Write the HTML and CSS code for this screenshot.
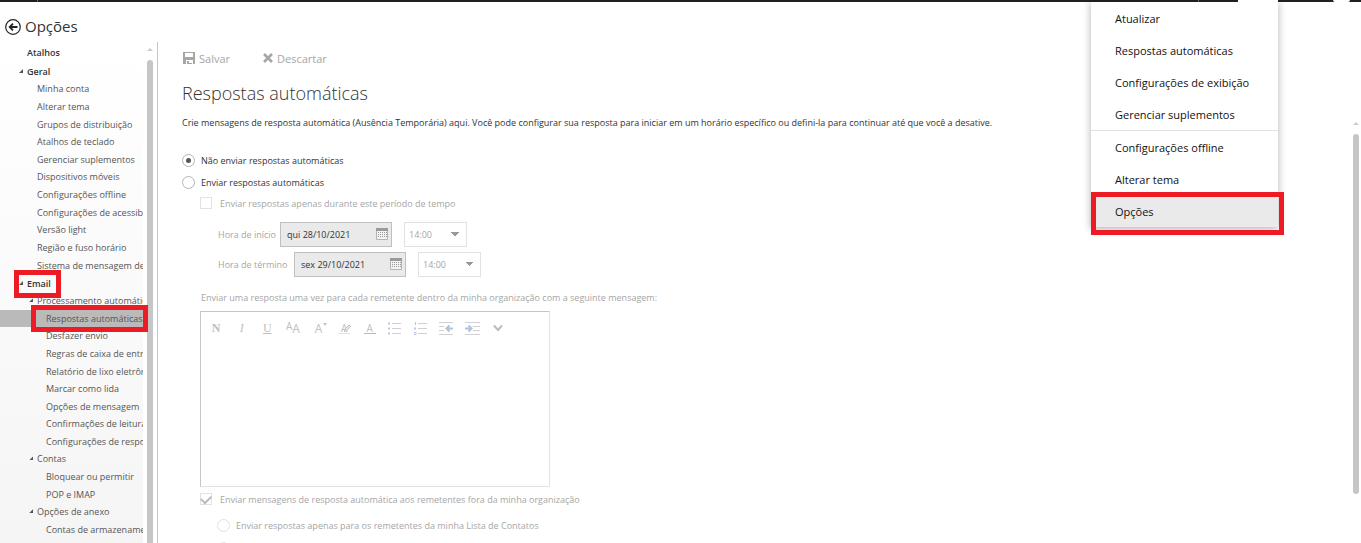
FILE: index.html
```html
<!doctype html>
<html lang="pt-BR">
<head>
  <meta charset="utf-8">
  <title>Opções</title>
  <link rel="stylesheet" href="styles.css">
</head>

<body>
  <div class="topbar">
    <span class="topbar-sep"></span>
    <span class="topbar-sep right"></span>
    <span class="topbar-gear"></span>
    <span class="topbar-avatar"></span>
  </div>

  <header class="page-header">
    <button type="button" class="back" aria-label="Voltar">
      <svg width="16" height="16" viewBox="0 0 16 16" fill="none" stroke="#222">
        <circle cx="8" cy="8" r="7.3" stroke-width="1.2"/>
        <path d="M12.5 8H5M8 4.7L4.7 8L8 11.3" stroke-width="1.8"/>
      </svg>
    </button>
    <h1>Opções</h1>
  </header>

  <div class="layout">
    <!-- Navigation -->
    <nav class="sidebar">
      <div class="tree">
        <a href="#" class="head first">Atalhos</a>
        <a href="#" class="head open">Geral</a>
        <ul class="list general">
          <li><a href="#">Minha conta</a></li>
          <li><a href="#">Alterar tema</a></li>
          <li><a href="#">Grupos de distribuição</a></li>
          <li><a href="#">Atalhos de teclado</a></li>
          <li><a href="#">Gerenciar suplementos</a></li>
          <li><a href="#">Dispositivos móveis</a></li>
          <li><a href="#">Configurações offline</a></li>
          <li><a href="#">Configurações de acessibilidade</a></li>
          <li><a href="#">Versão light</a></li>
          <li><a href="#">Região e fuso horário</a></li>
          <li><a href="#">Sistema de mensagem de texto</a></li>
        </ul>
        <a href="#" class="head open marked">Email<span class="mark mark-email"></span></a>
        <ul class="list email">
          <li><a href="#" class="open">Processamento automático</a></li>
          <li class="sub selected marked"><a href="#">Respostas automáticas</a><span class="mark mark-replies"></span></li>
          <li class="sub"><a href="#">Desfazer envio</a></li>
          <li class="sub"><a href="#">Regras de caixa de entrada</a></li>
          <li class="sub"><a href="#">Relatório de lixo eletrônico</a></li>
          <li class="sub"><a href="#">Marcar como lida</a></li>
          <li class="sub"><a href="#">Opções de mensagem</a></li>
          <li class="sub"><a href="#">Confirmações de leitura</a></li>
          <li class="sub"><a href="#">Configurações de resposta</a></li>
          <li><a href="#" class="open">Contas</a></li>
          <li class="sub"><a href="#">Bloquear ou permitir</a></li>
          <li class="sub"><a href="#">POP e IMAP</a></li>
          <li><a href="#" class="open">Opções de anexo</a></li>
          <li class="sub"><a href="#">Contas de armazenamento</a></li>
        </ul>
      </div>
      <div class="scrollbar">
        <span class="scroll-up"></span>
        <span class="thumb"></span>
      </div>
    </nav>

    <main class="content">
      <div class="toolbar">
        <button type="button">
          <svg width="12" height="12" viewBox="0 0 12 12">
            <path d="M0 0H12V12H10V8H3V12H0ZM2 1V5H10V1ZM4 9H6V11H9V12H4Z" fill="#a6a6a6" fill-rule="evenodd"/>
          </svg>
          Salvar
        </button>
        <button type="button">
          <svg width="10" height="10" viewBox="0 0 10 10">
            <path d="M1 1L9 9M9 1L1 9" stroke="#a6a6a6" stroke-width="2.6"/>
          </svg>
          Descartar
        </button>
      </div>
      <h2>Respostas automáticas</h2>

      <div class="scroll-area">
        <form class="replies">
          <p class="intro">Crie mensagens de resposta automática (Ausência Temporária) aqui. Você pode configurar sua resposta para iniciar em um horário específico ou defini-la para continuar até que você a desative.</p>

          <label class="option"><input type="radio" name="mode" checked>Não enviar respostas automáticas</label>
          <label class="option"><input type="radio" name="mode">Enviar respostas automáticas</label>

          <div class="disabled">
            <label class="option check"><input type="checkbox" disabled>Enviar respostas apenas durante este período de tempo</label>

            <div class="time-row">
              <label for="startDate" class="start">Hora de início</label>
              <div class="date">
                <input type="text" id="startDate" value="qui 28/10/2021" readonly>
                <svg width="12" height="12" viewBox="0 0 12 12">
                  <path d="M0.5 0.5H11.5V11.5H0.5Z" fill="#f4f4f4" stroke="#b4b4b4"/>
                  <path d="M0 0H12V3H0Z" fill="#9a9a9a"/>
                  <path d="M2 4.5H11M2 6.5H11M2 8.5H11" stroke="#999" stroke-dasharray="1 1"/>
                </svg>
              </div>
              <select aria-label="Hora de início" disabled><option>14:00</option></select>
            </div>
            <div class="time-row">
              <label for="endDate" class="end">Hora de término</label>
              <div class="date">
                <input type="text" id="endDate" value="sex 29/10/2021" readonly>
                <svg width="12" height="12" viewBox="0 0 12 12">
                  <path d="M0.5 0.5H11.5V11.5H0.5Z" fill="#f4f4f4" stroke="#b4b4b4"/>
                  <path d="M0 0H12V3H0Z" fill="#9a9a9a"/>
                  <path d="M2 4.5H11M2 6.5H11M2 8.5H11" stroke="#999" stroke-dasharray="1 1"/>
                </svg>
              </div>
              <select aria-label="Hora de término" disabled><option>14:00</option></select>
            </div>

            <label for="message" class="message-label">Enviar uma resposta uma vez para cada remetente dentro da minha organização com a seguinte mensagem:</label>
            <div class="editor">
              <div class="format-bar">
                <button type="button" class="bold" disabled>N</button>
                <button type="button" class="italic" disabled>I</button>
                <button type="button" class="underline" disabled>U</button>
                <button type="button" class="font-name" disabled><span>A</span>A</button>
                <button type="button" class="font-size" disabled>A
                  <svg width="4" height="3" viewBox="0 0 4 3"><path d="M0 0H4L2 3Z" fill="#b4c4dc"/></svg>
                </button>
                <button type="button" class="highlight" disabled>A
                  <svg width="7" height="8" viewBox="0 0 7 8"><path d="M0.5 7.5L1.2 5L5 1L6.5 2.5L2.8 6.5Z" fill="#eee" stroke="#bbb"/></svg>
                </button>
                <button type="button" class="color" disabled>A</button>
                <button type="button" aria-label="Marcadores" disabled>
                  <svg width="14" height="13" viewBox="0 0 14 13"><path d="M0 1.5H2M0 6.5H2M0 11.5H2" stroke="#b8c8e0" stroke-width="2"/><path d="M4 1.5H13M4 6.5H13M4 11.5H13" stroke="#d0d0d0"/></svg>
                </button>
                <button type="button" aria-label="Numeração" disabled>
                  <svg width="14" height="13" viewBox="0 0 14 13"><path d="M1.5 0V3M0 6.5H2M1 5V8M0 10.5H2V12.5H0" stroke="#b8c8e0" fill="none"/><path d="M4 1.5H13M4 6.5H13M4 11.5H13" stroke="#d0d0d0"/></svg>
                </button>
                <button type="button" aria-label="Diminuir recuo" disabled>
                  <svg width="15" height="13" viewBox="0 0 15 13"><path d="M0 0.5H14M0 4.5H5M0 8.5H5M0 12.5H14" stroke="#d0d0d0"/><path d="M14 6.5H8M10.5 3.5L7.5 6.5L10.5 9.5" stroke="#b0c2de" stroke-width="2" fill="none"/></svg>
                </button>
                <button type="button" aria-label="Aumentar recuo" disabled>
                  <svg width="15" height="13" viewBox="0 0 15 13"><path d="M0 0.5H15M8 4.5H15M8 8.5H15M0 12.5H15" stroke="#d0d0d0"/><path d="M0 6.5H6M3.5 3.5L6.5 6.5L3.5 9.5" stroke="#b0c2de" stroke-width="2" fill="none"/></svg>
                </button>
                <button type="button" aria-label="Mais" disabled>
                  <svg width="10" height="8" viewBox="0 0 10 8"><path d="M1 1.5L5 6L9 1.5" stroke="#bcbcbc" stroke-width="2" fill="none"/></svg>
                </button>
              </div>
              <textarea id="message" disabled></textarea>
            </div>

            <label class="option check"><input type="checkbox" checked disabled>Enviar mensagens de resposta automática aos remetentes fora da minha organização</label>
            <label class="option nested"><input type="radio" name="scope" disabled>Enviar respostas apenas para os remetentes da minha Lista de Contatos</label>
            <label class="option nested last"><input type="radio" name="scope" disabled></label>
          </div>
        </form>
        <div class="scrollbar">
          <span class="scroll-up"></span>
          <span class="thumb"></span>
        </div>
      </div>
    </main>
  </div>

  <!-- Settings menu -->
  <div class="menu">
    <a href="#">Atualizar</a>
    <a href="#">Respostas automáticas</a>
    <a href="#">Configurações de exibição</a>
    <a href="#">Gerenciar suplementos</a>
    <hr>
    <a href="#">Configurações offline</a>
    <a href="#">Alterar tema</a>
    <a href="#" class="active marked">Opções<span class="mark mark-options"></span></a>
  </div>
</body>
</html>
```
FILE: styles.css
```css
* {
  box-sizing: border-box;
}

body {
  margin: 0;
  height: 100vh;
  overflow: hidden;
  display: flex;
  flex-direction: column;
  background: #fff;
  color: #333;
  font-family: "Open Sans", "Noto Sans", sans-serif;
  font-size: 9px;
}

a {
  color: inherit;
  text-decoration: none;
}

button, input, select, textarea {
  font: inherit;
  color: inherit;
}

button {
  padding: 0;
  border: none;
  background: none;
}

.topbar {
  display: flex;
  flex: none;
  height: 2px;
  padding-right: 11px;
  background: #231f20;
}

.topbar-sep {
  width: 1px;
  margin-left: 37px;
  background: #666;
}

.topbar-sep.right {
  margin-left: auto;
}

.topbar-gear {
  width: 40px;
  margin-left: 39px;
  background: #fff;
}

.topbar-avatar {
  width: 17px;
  margin-left: 55px;
  border-radius: 0 0 8px 8px;
  background: #fff;
}

.page-header {
  display: flex;
  flex: none;
  align-items: center;
  gap: 4px;
  height: 40px;
  padding: 10px 5px 0;
}

.back {
  display: flex;
}

h1 {
  margin: 0;
  padding-bottom: 2px;
  font-size: 15px;
  font-weight: 400;
  line-height: 18px;
}

.layout {
  display: flex;
  flex: 1;
  min-height: 0;
}

/* Sidebar */
.sidebar {
  display: flex;
  flex: none;
  width: 158px;
  border-right: 1px solid #c6c6c6;
}

.tree {
  width: 143px;
  background: linear-gradient(#fff, #f5f5f5);
  white-space: nowrap;
  color: #555;
}

.head {
  display: block;
  height: 18px;
  padding-left: 27px;
  line-height: 20px;
  font-weight: 600;
  color: #333;
}

.head.first {
  height: 20px;
  line-height: 22px;
}

.list {
  display: grid;
  grid-template-columns: minmax(0, 1fr);
  grid-auto-rows: 1fr;
  margin: 0;
  padding: 0;
  list-style: none;
}

.general {
  height: 194px;
}

.email {
  height: 246px;
}

.list li {
  display: flex;
  align-items: center;
  padding-left: 29px;
}

.list li.sub {
  padding-left: 38px;
}

.list a {
  flex: 1;
  min-width: 0;
  padding-left: 8px;
  overflow: hidden;
}

.list li.selected {
  background: #bababa;
}

.open::before {
  content: "";
  display: inline-block;
  width: 4px;
  height: 4px;
  margin: 0 4px 2px -8px;
  background: #555;
  clip-path: polygon(100% 0, 100% 100%, 0 100%);
}

.scrollbar {
  display: flex;
  flex-direction: column;
  align-items: center;
  flex: none;
  width: 6px;
}

.sidebar .scrollbar {
  margin-left: 4px;
}

.scroll-up {
  width: 6px;
  height: 3px;
  margin-bottom: 9px;
  background: #c8ccd0;
  clip-path: polygon(50% 0, 100% 100%, 0 100%);
}

.sidebar .scroll-up {
  margin-top: 6px;
}

.thumb {
  flex: 1;
  width: 6px;
  border-radius: 3px 3px 0 0;
  background: #c6c6c6;
}

/* Content */
.content {
  display: flex;
  flex: 1;
  flex-direction: column;
  min-width: 0;
  padding-left: 24px;
}

.toolbar {
  display: flex;
  flex: none;
  gap: 33px;
  height: 32px;
  margin-bottom: 2px;
  padding-left: 1px;
  font-size: 11px;
  color: #a6a6a6;
}

.toolbar button {
  display: flex;
  align-items: center;
  gap: 4px;
}

h2 {
  margin: 0;
  height: 38px;
  font-size: 18px;
  font-weight: 300;
  line-height: 34px;
}

.scroll-area {
  display: flex;
  flex: 1;
  min-height: 0;
  padding-right: 2px;
}

.scroll-area .scroll-up {
  margin-top: 8px;
}

.scroll-area .thumb {
  flex: none;
  height: 84%;
  border-radius: 3px;
}

.replies {
  flex: 1;
  overflow: hidden;
}

.intro {
  margin: 0 0 17px;
  line-height: 18px;
}

.option {
  display: flex;
  align-items: center;
  gap: 6px;
  height: 22px;
}

.option input {
  appearance: none;
  display: grid;
  place-items: center;
  width: 13px;
  height: 13px;
  margin: 0;
  border: 1px solid #b4b4b4;
  border-radius: 50%;
  background: #fff;
}

.option input[type="radio"]:checked::after {
  content: "";
  width: 5px;
  height: 5px;
  border-radius: 50%;
  background: #555;
}

.disabled {
  padding-left: 18px;
  color: #a6a6a6;
}

.disabled .option input {
  border-color: #e2e2e2;
}

.option.check {
  gap: 8px;
  height: 20px;
}

.check input {
  width: 12px;
  height: 12px;
  border-radius: 0;
}

.check input:checked::after {
  content: "";
  width: 8px;
  height: 5px;
  margin-bottom: 2px;
  border: solid #bbb;
  border-width: 0 0 2px 2px;
  transform: rotate(-45deg);
}

.time-row {
  display: flex;
  align-items: center;
  height: 30px;
  padding-left: 18px;
}

.check + .time-row {
  margin-top: 6px;
}

.start {
  width: 62px;
}

.end {
  width: 76px;
}

.date {
  display: flex;
  align-items: center;
  width: 112px;
  height: 25px;
  margin-right: 12px;
  padding: 0 3px 0 6px;
  border: 1px solid #c0c0c0;
  background: #eaeaea;
  color: #333;
}

.date input {
  flex: 1;
  min-width: 0;
  padding: 0;
  border: none;
  background: none;
  outline: none;
}

.time-row select {
  appearance: none;
  width: 63px;
  height: 25px;
  padding: 0 4px;
  border: 1px solid #e2e2e2;
  border-radius: 0;
  background: conic-gradient(from -45deg at 50% 100%, #999 90deg, transparent 0) right 7px center / 8px 4px no-repeat;
  color: #a6a6a6;
  opacity: 1;
}

.message-label {
  display: block;
  margin: 9px 0 3px 1px;
  line-height: 20px;
}

.editor {
  width: 350px;
  height: 176px;
  margin-bottom: 2px;
  border: 1px solid;
  border-color: #c6c6c6 #e2e2e2 #e2e2e2 #c6c6c6;
}

.format-bar {
  display: flex;
  justify-content: space-between;
  height: 32px;
  padding: 0 43px 0 7px;
}

.format-bar button {
  position: relative;
  display: flex;
  flex: none;
  align-items: center;
  justify-content: center;
  width: 16px;
  font-size: 12px;
  color: #c0c0c0;
}

.format-bar .bold,
.format-bar .italic,
.format-bar .underline {
  font-family: "Liberation Serif", serif;
}

.format-bar .bold {
  font-weight: 700;
}

.format-bar .italic {
  font-style: italic;
}

.format-bar .underline {
  text-decoration: underline;
}

.font-name span {
  padding-bottom: 4px;
  font-size: 10px;
}

.font-size svg {
  position: absolute;
  top: 11px;
  right: 0;
}

.highlight svg {
  position: absolute;
  top: 12px;
  right: 1px;
}

.format-bar .highlight,
.format-bar .color {
  font-size: 10px;
}

.highlight::after,
.color::after {
  content: "";
  position: absolute;
  top: 21px;
  left: 2px;
  right: 2px;
  height: 1px;
  background: #ffe680;
}

.color::after {
  background: #ff9a9a;
}

.editor textarea {
  display: block;
  width: 100%;
  height: 142px;
  border: none;
  background: none;
  resize: none;
}

.nested {
  height: 32px;
  padding-left: 17px;
}

.nested.last {
  height: 14px;
}

/* Settings menu */
.menu {
  position: absolute;
  top: 0;
  right: 83px;
  width: 187px;
  padding-top: 2px;
  background: #fff;
  box-shadow: 0 2px 8px rgba(0, 0, 0, 0.3);
  clip-path: inset(2px -10px -10px);
  font-size: 11px;
  color: #111;
}

.menu a {
  display: block;
  height: 32px;
  padding-left: 24px;
  line-height: 34px;
}

.menu hr {
  height: 1px;
  margin: 0;
  border: none;
  background: #e2e2e2;
}

.menu .active {
  background: #eaeaea;
}

/* Red highlights */
.marked {
  position: relative;
}

.mark {
  position: absolute;
  border: 5px solid #ed1c24;
}

.mark-email {
  top: -4px;
  left: 14px;
  width: 47px;
  height: 28px;
}

.mark-replies {
  top: -5px;
  left: 31px;
  width: 117px;
  height: 27px;
}

.mark-options {
  top: -3px;
  left: 0;
  width: 193px;
  height: 43px;
}
```
